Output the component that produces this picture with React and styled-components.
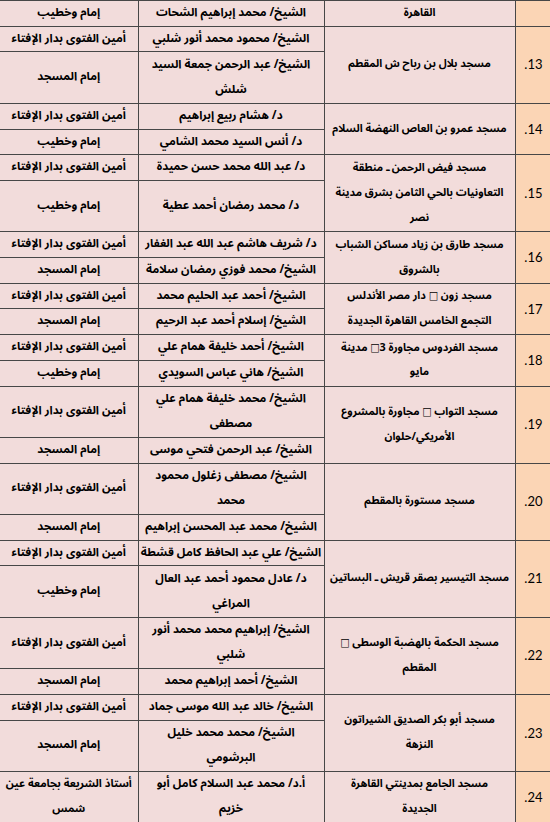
import React from "react";
import styled, { createGlobalStyle } from "styled-components";

const LINE = 25.7;

const GlobalStyle = createGlobalStyle`
  html, body {
    margin: 0;
    padding: 0;
    background: #ffffff;
  }
  body {
    width: 550px;
    overflow: hidden;
  }
`;

const Table = styled.table`
  width: 550px;
  table-layout: fixed;
  border-collapse: collapse;
  direction: rtl;
  font-family: "Noto Sans Arabic", "Noto Naskh Arabic", "DejaVu Sans Condensed", "DejaVu Sans", sans-serif;
  font-stretch: condensed;
  color: #000;
`;

const Col = styled.col`
  width: ${(p) => p.$w}px;
`;

const Row = styled.tr`
  height: ${(p) => p.$lines * LINE}px;
`;

const Cell = styled.td`
  background: #f2dcdb;
  border: 1px solid #474747;
  padding: 0 2px;
  text-align: center;
  vertical-align: middle;
  font-weight: bold;
  font-size: ${(p) => p.$size || 11.6}px;
  line-height: 24.7px;
  white-space: nowrap;
  overflow: hidden;
`;

const NumCell = styled(Cell)`
  background: #fbd5b5;
  font-family: "Lato", "Open Sans", sans-serif;
  font-stretch: normal;
  font-weight: normal;
  font-size: 13px;
  text-align: right;
  padding-right: 7px;
`;

const MosqueCell = styled(Cell)`
  font-size: 10.8px;
`;

const RoleCell = styled(Cell)`
  border-left: none;
`;

const groups = [
  {
    num: "",
    mosque: ["القاهرة"],
    rows: [{ name: ["الشيخ/ محمد إبراهيم الشحات"], role: ["إمام وخطيب"] }],
  },
  {
    num: "13.",
    mosque: ["مسجد بلال بن رباح ش  المقطم"],
    rows: [
      { name: ["الشيخ/ محمود محمد أنور شلبي"], role: ["أمين الفتوى بدار الإفتاء"] },
      { name: ["الشيخ/ عبد الرحمن جمعة السيد", "شلش"], role: ["إمام المسجد"] },
    ],
  },
  {
    num: "14.",
    mosque: ["مسجد عمرو بن العاص النهضة السلام"],
    rows: [
      { name: ["د/ هشام ربيع إبراهيم"], role: ["أمين الفتوى بدار الإفتاء"] },
      { name: ["د/ أنس السيد محمد الشامي"], role: ["إمام وخطيب"] },
    ],
  },
  {
    num: "15.",
    mosque: ["مسجد فيض الرحمن ـ منطقة", "التعاونيات بالحي الثامن بشرق مدينة", "نصر"],
    rows: [
      { name: ["د/ عبد الله محمد حسن حميدة"], role: ["أمين الفتوى بدار الإفتاء"] },
      { name: ["د/ محمد رمضان أحمد عطية"], role: ["إمام وخطيب"] },
    ],
  },
  {
    num: "16.",
    mosque: ["مسجد طارق بن زياد مساكن الشباب", "بالشروق"],
    rows: [
      { name: ["د/ شريف هاشم عبد الله عبد الغفار"], role: ["أمين الفتوى بدار الإفتاء"] },
      { name: ["الشيخ/ محمد فوزي رمضان سلامة"], role: ["إمام المسجد"] },
    ],
  },
  {
    num: "17.",
    mosque: ["مسجد زون □ دار مصر الأندلس", "التجمع الخامس القاهرة الجديدة"],
    rows: [
      { name: ["الشيخ/ أحمد عبد الحليم محمد"], role: ["أمين الفتوى بدار الإفتاء"] },
      { name: ["الشيخ/ إسلام أحمد عبد الرحيم"], role: ["إمام المسجد"] },
    ],
  },
  {
    num: "18.",
    mosque: ["مسجد الفردوس مجاورة  3□ مدينة", "مايو"],
    rows: [
      { name: ["الشيخ/ أحمد خليفة همام علي"], role: ["أمين الفتوى بدار الإفتاء"] },
      { name: ["الشيخ/ هاني عباس السويدي"], role: ["إمام وخطيب"] },
    ],
  },
  {
    num: "19.",
    mosque: ["مسجد التواب □ مجاورة  بالمشروع", "الأمريكي/حلوان"],
    rows: [
      { name: ["الشيخ/ محمد خليفة همام علي", "مصطفى"], role: ["أمين الفتوى بدار الإفتاء"] },
      { name: ["الشيخ/ عبد الرحمن فتحي موسى"], role: ["إمام المسجد"] },
    ],
  },
  {
    num: "20.",
    mosque: ["مسجد مستورة بالمقطم"],
    rows: [
      { name: ["الشيخ/ مصطفى زغلول محمود", "محمد"], role: ["أمين الفتوى بدار الإفتاء"] },
      { name: ["الشيخ/ محمد عبد المحسن إبراهيم"], role: ["إمام المسجد"] },
    ],
  },
  {
    num: "21.",
    mosque: ["مسجد التيسير بصقر قريش ـ البساتين"],
    rows: [
      { name: ["الشيخ/ علي عبد الحافظ كامل قشطة"], role: ["أمين الفتوى بدار الإفتاء"] },
      { name: ["د/ عادل محمود أحمد عبد العال", "المراغي"], role: ["إمام وخطيب"] },
    ],
  },
  {
    num: "22.",
    mosque: ["مسجد الحكمة  بالهضبة الوسطى □", "المقطم"],
    rows: [
      { name: ["الشيخ/ إبراهيم محمد محمد أنور", "شلبي"], role: ["أمين الفتوى بدار الإفتاء"] },
      { name: ["الشيخ/ أحمد إبراهيم محمد"], role: ["إمام المسجد"] },
    ],
  },
  {
    num: "23.",
    mosque: ["مسجد أبو بكر الصديق  الشيراتون", "النزهة"],
    rows: [
      { name: ["الشيخ/ خالد عبد الله موسى جماد"], role: ["أمين الفتوى بدار الإفتاء"] },
      { name: ["الشيخ/ محمد محمد خليل", "البرشومي"], role: ["إمام المسجد"] },
    ],
  },
  {
    num: "24.",
    mosque: ["مسجد الجامع بمدينتي القاهرة", "الجديدة"],
    rows: [
      {
        name: ["أ.د/ محمد عبد السلام كامل أبو", "خزيم"],
        role: ["أستاذ الشريعة بجامعة عين", "شمس"],
        roleSize: 11,
      },
    ],
  },
];

function Lines({ items }) {
  return items.map((t, i) => (
    <React.Fragment key={i}>
      {i > 0 && <br />}
      {t}
    </React.Fragment>
  ));
}

function rowLines(group) {
  const lines = group.rows.map((r) => Math.max(r.name.length, r.role.length));
  const total = lines.reduce((a, b) => a + b, 0);
  if (group.mosque.length > total) {
    lines[lines.length - 1] += group.mosque.length - total;
  }
  return lines;
}

function Group({ group }) {
  const lines = rowLines(group);
  return group.rows.map((r, i) => (
    <Row key={i} $lines={lines[i]}>
      {i === 0 && (
        <>
          <NumCell rowSpan={group.rows.length}>{group.num}</NumCell>
          <MosqueCell rowSpan={group.rows.length}>
            <Lines items={group.mosque} />
          </MosqueCell>
        </>
      )}
      <Cell>
        <Lines items={r.name} />
      </Cell>
      <RoleCell $size={r.roleSize}>
        <Lines items={r.role} />
      </RoleCell>
    </Row>
  ));
}

export default function App() {
  return (
    <>
      <GlobalStyle />
      <Table>
        <colgroup>
          <Col $w={35} />
          <Col $w={191} />
          <Col $w={186} />
          <Col $w={138} />
        </colgroup>
        <tbody>
          {groups.map((g, i) => (
            <Group key={i} group={g} />
          ))}
        </tbody>
      </Table>
    </>
  );
}
